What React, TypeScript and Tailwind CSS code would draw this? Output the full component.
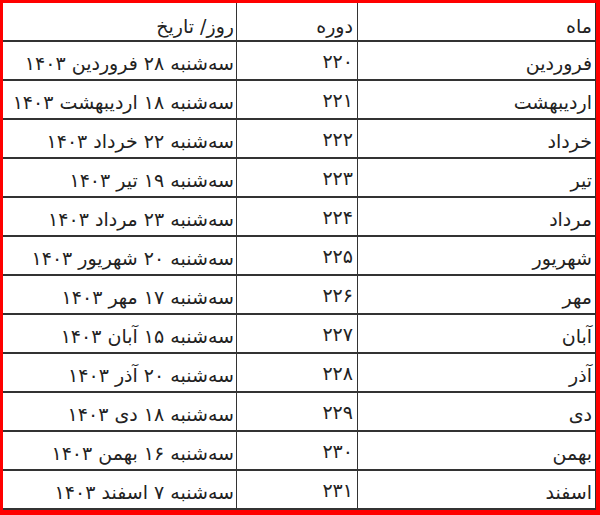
const rows: [string, string, string][] = [
  ["فروردین", "۲۲۰", "سه‌شنبه ۲۸ فروردین ۱۴۰۳"],
  ["اردیبهشت", "۲۲۱", "سه‌شنبه ۱۸ اردیبهشت ۱۴۰۳"],
  ["خرداد", "۲۲۲", "سه‌شنبه ۲۲ خرداد ۱۴۰۳"],
  ["تیر", "۲۲۳", "سه‌شنبه ۱۹ تیر ۱۴۰۳"],
  ["مرداد", "۲۲۴", "سه‌شنبه ۲۳ مرداد ۱۴۰۳"],
  ["شهریور", "۲۲۵", "سه‌شنبه ۲۰ شهریور ۱۴۰۳"],
  ["مهر", "۲۲۶", "سه‌شنبه ۱۷ مهر ۱۴۰۳"],
  ["آبان", "۲۲۷", "سه‌شنبه ۱۵ آبان ۱۴۰۳"],
  ["آذر", "۲۲۸", "سه‌شنبه ۲۰ آذر ۱۴۰۳"],
  ["دی", "۲۲۹", "سه‌شنبه ۱۸ دی ۱۴۰۳"],
  ["بهمن", "۲۳۰", "سه‌شنبه ۱۶ بهمن ۱۴۰۳"],
  ["اسفند", "۲۳۱", "سه‌شنبه ۷ اسفند ۱۴۰۳"],
]

function Header() {
  const cell = "h-[39px] flex items-center pt-[10px] border-b-2 border-[#333]"
  return (
    <>
      <div className={`${cell} pr-[3px] border-l`}>ماه</div>
      <div className={`${cell} pr-[4px] border-l`}>دوره</div>
      <div className={`${cell} pr-[2px]`}>روز/ تاریخ</div>
    </>
  )
}

function Row({ cells }: { cells: [string, string, string] }) {
  return (
    <>
      <div className="h-[39px] flex items-center pt-[6px] pr-[3px] border-b-2 border-l border-[#333]">{cells[0]}</div>
      <div className="h-[39px] flex items-center pt-[2px] pr-[4px] border-b-2 border-l border-[#333]">{cells[1]}</div>
      <div className="h-[39px] flex items-center pt-[6px] pr-[2px] border-b-2 border-[#333] whitespace-nowrap">{cells[2]}</div>
    </>
  )
}

export default function App() {
  return (
    <div className="w-[600px] h-[515px] bg-white border-[#f00] border-t-[3px] border-l-[3px] border-r-[4px] border-b-[5px]">
      <div
        dir="rtl"
        className="grid grid-cols-[238px_121px_1fr] border-r border-[#333] text-[19px] text-[#222] leading-none"
        style={{ fontFamily: '"DejaVu Sans", sans-serif' }}
      >
        <Header />
        {rows.map((r) => (
          <Row key={r[0]} cells={r} />
        ))}
      </div>
    </div>
  )
}
